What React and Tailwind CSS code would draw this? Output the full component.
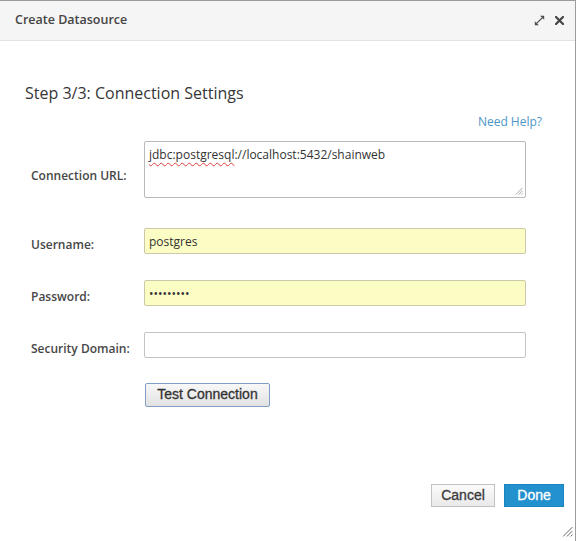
import React from 'react';

const ExpandIcon = () => (
  <svg width="11" height="11" viewBox="0 0 11 11" fill="#4a4a4a">
    <path d="M2.6 8.4 L8.4 2.6" stroke="#4a4a4a" strokeWidth="1.2" />
    <path d="M6.2 0.8 H10.2 V4.8 Z" />
    <path d="M0.8 6.2 V10.2 H4.8 Z" />
  </svg>
);

const CloseIcon = () => (
  <svg width="9" height="9" viewBox="0 0 9 9">
    <path d="M1 1 L8 8 M8 1 L1 8" stroke="#444" strokeWidth="2.2" strokeLinecap="square" />
  </svg>
);

const Grip = ({ size = 10, color = '#777' }) => (
  <svg width={size} height={size} viewBox="0 0 10 10">
    <path d="M9.5 1 L1 9.5 M9.5 4.5 L4.5 9.5 M9.5 7.8 L7.8 9.5" stroke={color} strokeWidth="0.9" />
  </svg>
);

const Row = ({ label, children, top, labelPad = 'pt-[9px]' }) => (
  <div className={`flex items-start ${top}`}>
    <div className={`w-[113px] shrink-0 text-[12px] leading-[16px] font-semibold text-[#474747] ${labelPad}`}>
      {label}
    </div>
    {children}
  </div>
);

export default function App() {
  const inputBase =
    'w-[382px] h-[26px] px-[4px] text-[12px] leading-[16px] text-[#333] rounded-[2px] border outline-none font-["Open_Sans",sans-serif]';

  return (
    <div className="relative w-[576px] h-[541px] bg-white border-t border-r border-[#9c9c9c] flex flex-col font-['Open_Sans',sans-serif]">
      {/* Header */}
      <div className="h-[40px] shrink-0 bg-[#f5f5f5] border-b border-[#e3e3e3] flex items-center justify-between pl-[15px] pr-[11px]">
        <div className="text-[12.5px] font-semibold text-[#444]">Create Datasource</div>
        <div className="flex items-center gap-[10px]">
          <ExpandIcon />
          <CloseIcon />
        </div>
      </div>

      {/* Body */}
      <div className="flex-1 flex flex-col px-[25px]">
        <h2 className="mt-[41px] text-[16px] leading-[22px] text-[#363636]">Step 3/3: Connection Settings</h2>
        <a className="self-end mr-[8px] mt-[10px] text-[12px] leading-[16px] text-[#4b97c6]">Need Help?</a>

        <div className="ml-[6px] flex flex-col">
          <Row label="Connection URL:" top="mt-[11px]" labelPad="pt-[27px]">
            <div className="relative w-[382px] h-[57px] border border-[#b9b9b9] rounded-[2px] pl-[4px] pt-[5px] text-[12px] leading-[16px] text-[#333]">
              <span className="underline decoration-wavy decoration-[#e04040] decoration-1 underline-offset-[3px]">jdbc:postgresql</span>
              ://localhost:5432/shainweb
              <div className="absolute right-[2px] bottom-[2px]">
                <Grip size={8} color="#888" />
              </div>
            </div>
          </Row>

          <Row label="Username:" top="mt-[30px]">
            <input readOnly defaultValue="postgres" className={`${inputBase} bg-[#fcfdc5] border-[#cacaa8]`} />
          </Row>

          <Row label="Password:" top="mt-[26px]">
            <input readOnly type="password" defaultValue="postgres1" className={`${inputBase} bg-[#fcfdc5] border-[#cacaa8]`} />
          </Row>

          <Row label="Security Domain:" top="mt-[26px]">
            <input readOnly defaultValue="" className={`${inputBase} bg-white border-[#c4c4c4]`} />
          </Row>

          <div className="mt-[23px] ml-[114px]">
            <button className="w-[125px] h-[24px] rounded-[2px] border border-[#7f9fc8] bg-gradient-to-b from-[#f8f8f8] to-[#e2e2e2] text-[14px] text-[#333] font-['Liberation_Sans',Arial,sans-serif] [-webkit-text-stroke:0.3px_#333]">
              Test Connection
            </button>
          </div>
        </div>

        {/* Footer */}
        <div className="mt-auto flex justify-end gap-[9px] mr-[-14px] pb-[34px]">
          <button className="w-[64px] h-[23px] border border-[#c2c2c2] bg-gradient-to-b from-[#fbfbfb] to-[#e9e9e9] text-[14px] text-[#3a3a3a] font-['Liberation_Sans',Arial,sans-serif] [-webkit-text-stroke:0.3px_#3a3a3a]">
            Cancel
          </button>
          <button className="w-[60px] h-[23px] border border-[#1b83bd] bg-[#2291cd] text-[14px] text-white font-['Liberation_Sans',Arial,sans-serif] [-webkit-text-stroke:0.3px_#fff]">
            Done
          </button>
        </div>
      </div>

      <div className="absolute right-[2px] bottom-[4px]">
        <Grip size={11} color="#666" />
      </div>
    </div>
  );
}
